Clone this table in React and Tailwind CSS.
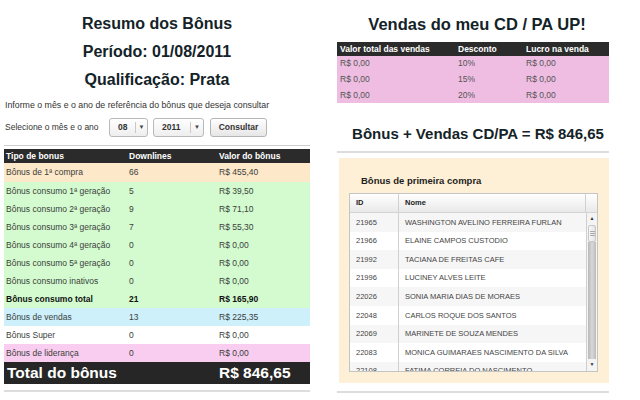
import React from "react";

const bonusRows = [
  { tipo: "Bônus de 1ª compra", down: "66", valor: "R$ 455,40", bg: "bg-[#fde8c9]", h: "h-[19px]" },
  { tipo: "Bônus consumo 1ª geração", down: "5", valor: "R$ 39,50", bg: "bg-[#d3fbcf]" },
  { tipo: "Bônus consumo 2ª geração", down: "9", valor: "R$ 71,10", bg: "bg-[#d3fbcf]" },
  { tipo: "Bônus consumo 3ª geração", down: "7", valor: "R$ 55,30", bg: "bg-[#d3fbcf]" },
  { tipo: "Bônus consumo 4ª geração", down: "0", valor: "R$ 0,00", bg: "bg-[#d3fbcf]" },
  { tipo: "Bônus consumo 5ª geração", down: "0", valor: "R$ 0,00", bg: "bg-[#d3fbcf]" },
  { tipo: "Bônus consumo inativos", down: "0", valor: "R$ 0,00", bg: "bg-[#d3fbcf]" },
  { tipo: "Bônus consumo total", down: "21", valor: "R$ 165,90", bg: "bg-[#d3fbcf]", bold: true },
  { tipo: "Bônus de vendas", down: "13", valor: "R$ 225,35", bg: "bg-[#cdf0fb]" },
  { tipo: "Bônus Super", down: "0", valor: "R$ 0,00", bg: "bg-white" },
  { tipo: "Bônus de liderança", down: "0", valor: "R$ 0,00", bg: "bg-[#f9cdef]" },
];

const vendas = [
  ["R$ 0,00", "10%", "R$ 0,00", "h-[15px]"],
  ["R$ 0,00", "15%", "R$ 0,00", "h-[16px]"],
  ["R$ 0,00", "20%", "R$ 0,00", "h-[16px]"],
];

const compras = [
  ["21965", "WASHINGTON AVELINO FERREIRA FURLAN"],
  ["21966", "ELAINE CAMPOS CUSTODIO"],
  ["21992", "TACIANA DE FREITAS CAFE"],
  ["21996", "LUCINEY ALVES LEITE"],
  ["22026", "SONIA MARIA DIAS DE MORAES"],
  ["22048", "CARLOS ROQUE DOS SANTOS"],
  ["22069", "MARINETE DE SOUZA MENDES"],
  ["22083", "MONICA GUIMARAES NASCIMENTO DA SILVA"],
  ["22108", "FATIMA CORREIA DO NASCIMENTO"],
];

function SelectBox({ value, width, divider }) {
  return (
    <div
      className={`${width} h-[19px] flex items-center rounded-[3px] border border-[#b9b9b9] bg-gradient-to-b from-white to-[#eeeeee] text-[8.5px] font-bold text-[#333]`}
    >
      <span className={`${divider} pl-[8px]`}>{value}</span>
      <span className="h-[11px] w-px bg-[#c8c8c8]" />
      <span className="flex-1 text-center text-[6px] text-[#444]">▼</span>
    </div>
  );
}

export default function App() {
  return (
    <div className="w-[640px] h-[400px] overflow-hidden bg-white flex font-['Liberation_Sans',Arial,sans-serif] text-[#3b3f3b]">
      {/* coluna esquerda */}
      <div className="ml-[4px] w-[306px] flex flex-col pt-[10px]">
        <h1 className="h-[28px] leading-[28px] text-center text-[16px] font-bold text-[#132328]">
          Resumo dos Bônus
        </h1>
        <h2 className="h-[28px] leading-[28px] text-center text-[16px] font-bold text-[#132328]">
          Período: 01/08/2011
        </h2>
        <h2 className="h-[28px] leading-[28px] text-center text-[16px] font-bold text-[#132328]">
          Qualificação: Prata
        </h2>
        <p className="mt-[5px] h-[12px] leading-[12px] pl-[1px] text-[8.8px] text-[#333] whitespace-nowrap">
          Informe o mês e o ano de referência do bônus que deseja consultar
        </p>
        <div className="mt-[7px] h-[19px] flex items-center text-[8.5px] text-[#333]">
          <span className="w-[105px] pl-[1px]">Selecione o mês e o ano</span>
          <SelectBox value="08" width="w-[39px]" divider="w-[25px]" />
          <div className="w-[5px]" />
          <SelectBox value="2011" width="w-[51px]" divider="w-[36px]" />
          <div className="w-[6px]" />
          <button className="w-[57px] h-[19px] rounded-[3px] border border-[#b5b5b5] bg-gradient-to-b from-white to-[#e6e6e6] text-[8.5px] font-bold text-[#333]">
            Consultar
          </button>
        </div>
        <div className="mt-[8px] h-px bg-[#cfcfcf]" />

        <div className="mt-[3px] text-[8.5px]">
          <div className="h-[14px] flex items-center bg-[#2b2b2b] text-white font-bold">
            <span className="w-[125px] pl-[2px]">Tipo de bonus</span>
            <span className="w-[90px]">Downlines</span>
            <span>Valor do bônus</span>
          </div>
          {bonusRows.map((r) => (
            <div
              key={r.tipo}
              className={`${r.h || "h-[18px]"} flex items-center ${r.bg} ${r.bold ? "font-bold text-[#111]" : ""}`}
            >
              <span className="w-[125px] pl-[2px]">{r.tipo}</span>
              <span className="w-[90px]">{r.down}</span>
              <span>{r.valor}</span>
            </div>
          ))}
          <div className="h-[22px] flex items-center bg-[#262626] text-white font-bold text-[15.5px]">
            <span className="w-[215px] pl-[3px]">Total do bônus</span>
            <span>R$ 846,65</span>
          </div>
        </div>
        <div className="mt-[6px] h-[2px] bg-[#dddddd]" />
      </div>

      {/* coluna direita */}
      <div className="ml-[27px] w-[272px] flex flex-col pt-[10px]">
        <h1 className="h-[28px] leading-[28px] text-center text-[16.5px] font-bold text-[#132328] pl-[8px] whitespace-nowrap">
          Vendas do meu CD / PA UP!
        </h1>
        <div className="mt-[4px] text-[8.5px]">
          <div className="h-[14px] flex items-center bg-[#2b2b2b] text-white font-bold">
            <span className="w-[121px] pl-[3px]">Valor total das vendas</span>
            <span className="w-[68px]">Desconto</span>
            <span>Lucro na venda</span>
          </div>
          {vendas.map((v, i) => (
            <div key={i} className={`${v[3]} flex items-center bg-[#eebde1] text-[#555]`}>
              <span className="w-[121px] pl-[3px]">{v[0]}</span>
              <span className="w-[68px]">{v[1]}</span>
              <span>{v[2]}</span>
            </div>
          ))}
        </div>
        <h2 className="mt-[17px] h-[28px] leading-[28px] text-center text-[15px] font-bold text-[#132328] pl-[10px] whitespace-nowrap">
          Bônus + Vendas CD/PA = R$ 846,65
        </h2>
        <div className="mt-[3px] h-[2px] bg-[#dddddd]" />

        <div className="mt-[5px] ml-[2px] h-[225px] bg-[#fdf0d6] flex flex-col">
          <p className="mt-[17px] h-[12px] leading-[12px] pl-[22px] text-[9.5px] font-bold text-[#1d1d1d]">
            Bônus de primeira compra
          </p>
          <div className="mt-[6px] ml-[10px] w-[249px] h-[179px] border border-[#c4c4c4] bg-white flex flex-col text-[7.5px] text-[#444]">
            <div className="h-[19px] shrink-0 flex border-b border-[#d4d4d4] bg-gradient-to-b from-white to-[#e9e9e9] font-bold text-[#222]">
              <span className="w-[49px] pl-[6px] flex items-center border-r border-[#d0d0d0]">ID</span>
              <span className="flex-1 pl-[6px] flex items-center border-r border-[#d0d0d0]">Nome</span>
              <span className="w-[11px]" />
            </div>
            <div className="flex flex-1 overflow-hidden">
              <div className="flex-1 overflow-hidden">
                {compras.map(([id, nome], i) => (
                  <div
                    key={id}
                    className={`h-[18.6px] shrink-0 flex ${i % 2 === 0 ? "bg-[#f6f6f6]" : "bg-white"}`}
                  >
                    <span className="w-[49px] pl-[6px] flex items-center border-r border-[#d0d0d0]">{id}</span>
                    <span className="flex-1 pl-[6px] flex items-center whitespace-nowrap">{nome}</span>
                  </div>
                ))}
              </div>
              {/* barra de rolagem */}
              <div className="w-[11px] flex flex-col border-l border-[#cfcfcf] bg-[#f4f4f4]">
                <div className="h-[12px] flex items-center justify-center text-[5px] text-[#333]">▲</div>
                <div className="h-[17px] mx-px rounded-[2px] border border-[#c7c7c7] bg-gradient-to-r from-[#f8f8f8] to-[#e4e4e4] flex flex-col items-center justify-center gap-px">
                  <span className="w-[5px] h-px bg-[#aaa]" />
                  <span className="w-[5px] h-px bg-[#aaa]" />
                  <span className="w-[5px] h-px bg-[#aaa]" />
                </div>
                <div className="flex-1 mx-px bg-gradient-to-r from-[#b8b8b8] via-[#d8d8d8] to-[#bcbcbc]" />
                <div className="h-[12px] flex items-center justify-center text-[5px] text-[#333]">▼</div>
              </div>
            </div>
          </div>
        </div>
        <div className="mt-[8px] h-[2px] bg-[#dddddd]" />
      </div>
    </div>
  );
}
